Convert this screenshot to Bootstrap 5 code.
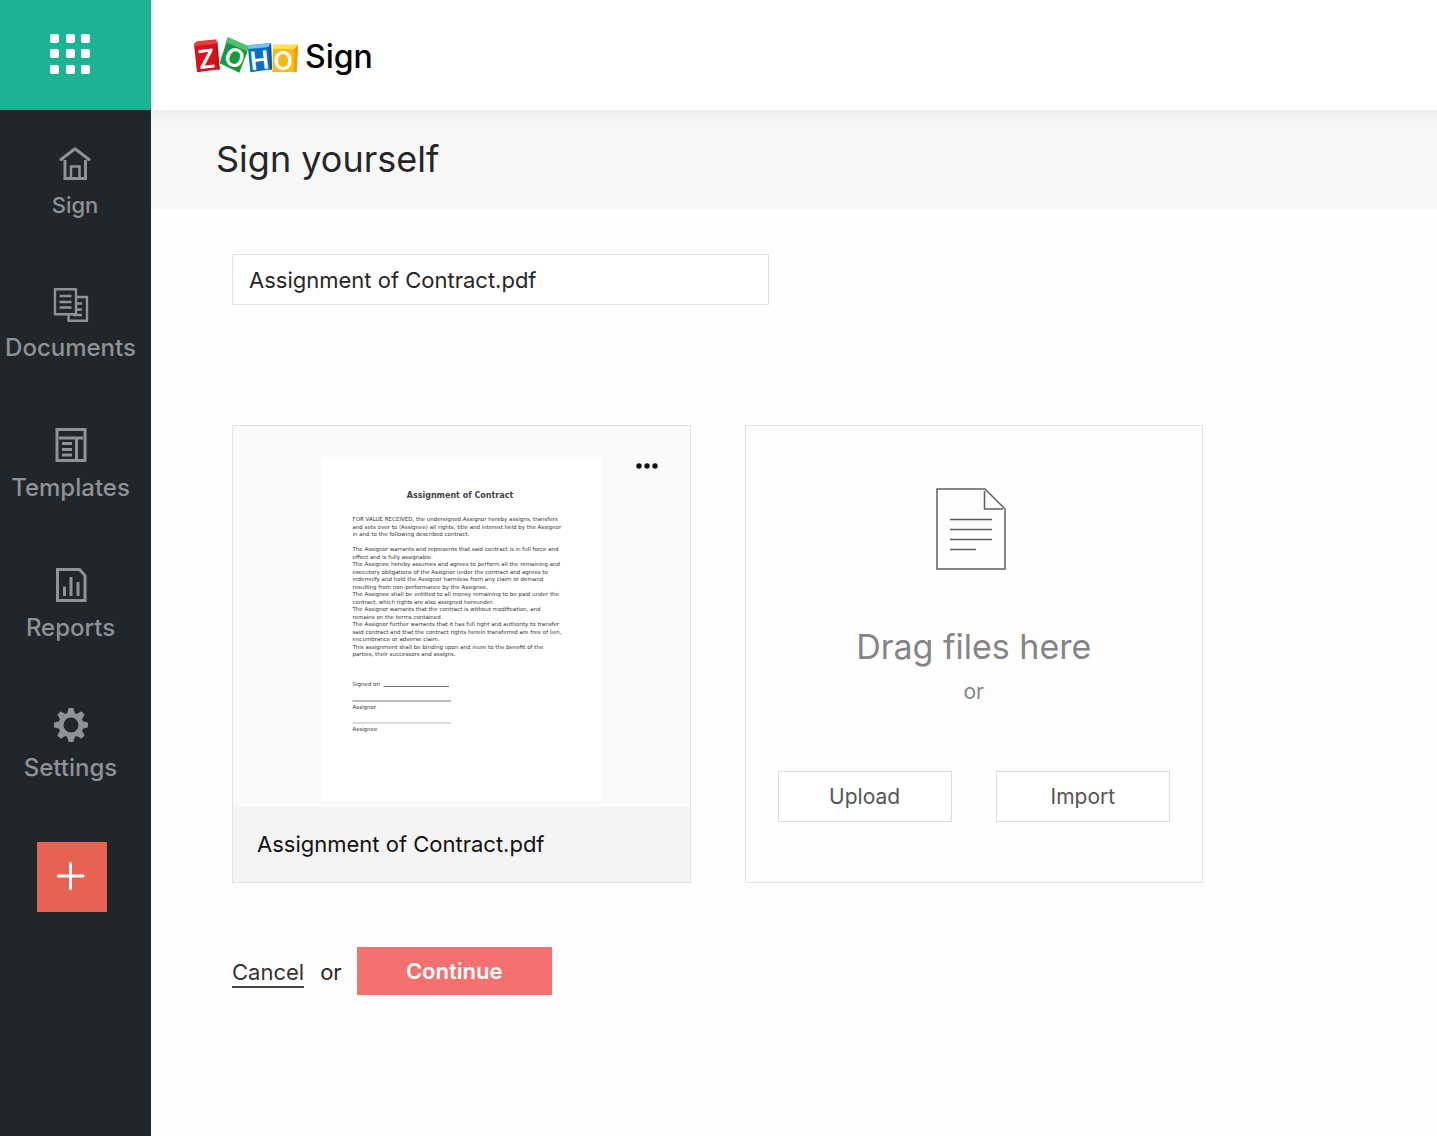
<!DOCTYPE html>
<html lang="en">
<head>
<meta charset="utf-8">
<meta name="viewport" content="width=device-width, initial-scale=1">
<title>Zoho Sign - Sign yourself</title>
<link href="https://cdn.jsdelivr.net/npm/bootstrap@5.3.0/dist/css/bootstrap.min.css" rel="stylesheet">
<style>
:root { --ink: #262626; --line: #e2e2e2; --side: #21262a; --side-fg: #8f9296; }
body { font-family: Inter, "Liberation Sans", sans-serif; font-size: 22px; line-height: 28px; color: var(--ink); background: #fefefe; }
svg { display: block; }
.side { width: 151px; background: var(--side); }
.apps-btn { height: 110px; background: #1bb394; border: 0; padding: 0 10px 2px 0; }
.side-nav { padding: 37px 10px 0 0; gap: 64px; }
.side-link { color: var(--side-fg); font-size: 24px; font-weight: 500; line-height: 32px; gap: 10px; }
.side-home { font-size: 22px; line-height: 28px; padding: 0 0 5px 9px; }
.side-link:hover { color: #fff; }
.add-btn { width: 70px; height: 70px; margin: 58px 0 0 37px; background: #e66252; border: 0; }
.topbar { height: 110px; padding-left: 43px; background: #fff; gap: 6px; }
.brand-name { font-size: 32px; font-weight: 500; line-height: 40px; color: #000; padding-top: 4px; }
.title-band { height: 99px; padding: 0 0 2px 65px; background: linear-gradient(#eeeeee, #f5f5f5 9px, #f7f7f7 18px); }
.title-band h1 { font-size: 36px; line-height: 44px; font-weight: 400; }
.content { padding: 45px 40px 60px 81px; }
.name-box { max-width: 537px; height: 51px; padding: 0 16px; font-size: 22px; color: var(--ink); border: 1px solid var(--line); border-radius: 0; background: #fff; }
.tiles { max-width: 971px; gap: 54px; margin-top: 120px; }
.tile { flex: 1 1 0; height: 458px; border: 1px solid var(--line); }
.thumb { background: #fafafa; padding-top: 31px; height: 381px; }
.sheet { background: #fff; width: 280px; height: 344px; }
.tile-name { background: #f4f4f4; color: #111; padding: 0 0 2px 24px; }
.more-btn { top: 29px; right: 26px; padding: 6px; border: 0; background: none; }
.drop-icon { margin-top: 62px; }
.drop-title { font-size: 34px; line-height: 40px; color: #858585; margin-top: 57px; }
.drop-or { font-size: 21px; color: #858585; margin-top: 11px; }
.drop-actions { gap: 44px; padding: 0 32px; margin-top: 65px; }
.plain-btn { height: 51px; font-size: 21px; color: #555; border: 1px solid #dcdcdc; border-radius: 0; background: #fff; }
.form-foot { margin-top: 64px; gap: 15px; }
.cancel-link { color: #333; text-decoration: none; border-bottom: 2px solid #444; }
.go-btn { width: 195px; height: 48px; font-size: 22px; font-weight: 600; color: #fff; background: #f57170; border: 0; border-radius: 0; }
</style>
</head>
<body>
<div class="d-flex min-vh-100">
  <aside class="side flex-shrink-0 d-flex flex-column">
    <button class="apps-btn d-flex align-items-center justify-content-center" type="button" aria-label="Apps">
      <svg width="42" height="42" fill="#fff"><rect x="0" y="1" width="9" height="9" rx="2"/><rect x="16" y="1" width="9" height="9" rx="2"/><rect x="31" y="1" width="9" height="9" rx="2"/><rect x="0" y="16" width="9" height="9" rx="2"/><rect x="16" y="16" width="9" height="9" rx="2"/><rect x="31" y="16" width="9" height="9" rx="2"/><rect x="0" y="32" width="9" height="9" rx="2"/><rect x="16" y="32" width="9" height="9" rx="2"/><rect x="31" y="32" width="9" height="9" rx="2"/></svg>
    </button>
    <nav class="side-nav nav flex-column flex-nowrap">
      <a class="side-link side-home d-flex flex-column align-items-center text-decoration-none" href="#">
        <svg width="34" height="34" fill="none" stroke="currentColor" stroke-width="3"><path d="M3 12.500 17 1.800 31 12.500" stroke-linecap="round" stroke-linejoin="round"/><path d="M7 13V31.500H27.500V13"/><path d="M13 31V19.500H21.500V31" stroke-width="2.500"/></svg>
        Sign
      </a>
      <a class="side-link d-flex flex-column align-items-center text-decoration-none" href="#">
        <svg width="36" height="34" fill="none" stroke="currentColor" stroke-width="2.400" stroke-linejoin="round"><rect x="2" y="1.200" width="21" height="25"/><path d="M24 9H34V32.800H15.500V27M6.500 8H18.500M6.500 14H18.500M6.500 19.500H18.500M24 15.500H29M24 21.500H29M20 27H29"/></svg>
        Documents
      </a>
      <a class="side-link d-flex flex-column align-items-center text-decoration-none" href="#">
        <svg width="34" height="34" fill="none" stroke="currentColor" stroke-width="3"><rect x="3" y="1.500" width="28" height="31"/><path d="M5 10H29M22.500 10V31M8 15.500H18M8 21.500H18M8 27H18"/></svg>
        Templates
      </a>
      <a class="side-link d-flex flex-column align-items-center text-decoration-none" href="#">
        <svg width="34" height="34" fill="none" stroke="currentColor" stroke-width="3"><path d="M3.500 1.500H25.500L31 7.500V32.500H3.500Z"/><path d="M10.500 28V18.500M17 28V9M24 28V14"/></svg>
        Reports
      </a>
      <a class="side-link d-flex flex-column align-items-center text-decoration-none" href="#">
        <svg width="34" height="34" viewBox="-17 -17 34 34"><circle r="10" fill="none" stroke="currentColor" stroke-width="5"/><g fill="currentColor"><path id="tooth" d="M-4-11-2.500-16.500Q-2.300-17-1.800-17H1.800Q2.300-17 2.500-16.500L4-11Z"/><use href="#tooth" transform="rotate(45)"/><use href="#tooth" transform="rotate(90)"/><use href="#tooth" transform="rotate(135)"/><use href="#tooth" transform="rotate(180)"/><use href="#tooth" transform="rotate(225)"/><use href="#tooth" transform="rotate(270)"/><use href="#tooth" transform="rotate(315)"/></g></svg>
        Settings
      </a>
    </nav>
    <button class="add-btn d-flex align-items-center justify-content-center" type="button" aria-label="New">
      <svg width="30" height="30" stroke="#fff" stroke-width="3" stroke-linecap="round"><path d="M13.500 1.500V26.500M1.500 14H26"/></svg>
    </button>
  </aside>

  <div class="flex-grow-1 d-flex flex-column">
    <header class="topbar d-flex align-items-center">
      <svg width="105" height="49" viewBox="42 28 315 147" role="img" aria-label="Zoho">
        <g font-family="Inter, sans-serif" font-weight="600" fill="#fff" text-anchor="middle">
          <path d="M42 66 108 57 119 143 51 152Z" fill="#d8101f"/><path d="M42 66 50 59 110 53 108 66 44 74Z" fill="#ef3b3f"/><path d="M108 66 112 55 119 143 114 146Z" fill="#b00c18"/>
          <path d="M143 47 206 74 200 96 178 153 119 125 132 85Z" fill="#149a3c"/><path d="M143 47 206 74 200 88 138 62Z" fill="#4fc06c"/><path d="M138 62 143 47 124 105 119 125Z" fill="#0b7a2c"/>
          <path d="M203 71 273 64 276 143 211 152Z" fill="#0b6fc4"/><path d="M203 71 273 64 266 76 204 82Z" fill="#7cc0ee"/><path d="M266 76 273 64 276 143 270 146Z" fill="#0a559c"/>
          <path d="M279 69 354 69 350 150 277 152Z" fill="#fcb913"/><path d="M279 69 354 69 343 82 278 82Z" fill="#ffe14d"/><path d="M343 82 354 69 350 150 342 152Z" fill="#f39a10"/>
          <text x="80" y="140" font-size="78" transform="rotate(-7 80 112)">Z</text>
          <text x="164" y="135" font-size="76" transform="rotate(24 164 108)">O</text>
          <text x="238" y="143" font-size="76" transform="rotate(-6 238 115)">H</text>
          <text x="310" y="145" font-size="76">O</text>
        </g>
      </svg>
      <span class="brand-name">Sign</span>
    </header>
    <div class="title-band d-flex align-items-center"><h1 class="m-0">Sign yourself</h1></div>

    <main class="content">
      <input class="name-box form-control" type="text" value="Assignment of Contract.pdf" aria-label="Document name">

      <div class="tiles d-flex">
        <section class="tile position-relative d-flex flex-column">
          <div class="thumb d-flex justify-content-center align-items-start">
            <svg class="sheet" viewBox="0 0 560 688" font-family="DejaVu Sans, sans-serif" font-size="11" fill="#333">
              <text x="278" y="82" font-size="16" font-weight="700" text-anchor="middle" fill="#444">Assignment of Contract</text>
              <text x="63" y="128">FOR VALUE RECEIVED, the undersigned Assignor hereby assigns, transfers</text>
              <text x="63" y="143">and sets over to (Assignee) all rights, title and interest held by the Assignor</text>
              <text x="63" y="158">in and to the following described contract:</text>
              <text x="63" y="188">The Assignor warrants and represents that said contract is in full force and</text>
              <text x="63" y="203">effect and is fully assignable.</text>
              <text x="63" y="218">The Assignee hereby assumes and agrees to perform all the remaining and</text>
              <text x="63" y="233">executory obligations of the Assignor under the contract and agrees to</text>
              <text x="63" y="248">indemnify and hold the Assignor harmless from any claim or demand</text>
              <text x="63" y="263">resulting from non-performance by the Assignee.</text>
              <text x="63" y="278">The Assignee shall be entitled to all money remaining to be paid under the</text>
              <text x="63" y="293">contract, which rights are also assigned hereunder.</text>
              <text x="63" y="308">The Assignor warrants that the contract is without modification, and</text>
              <text x="63" y="323">remains on the terms contained.</text>
              <text x="63" y="338">The Assignor further warrants that it has full right and authority to transfer</text>
              <text x="63" y="353">said contract and that the contract rights herein transferred are free of lien,</text>
              <text x="63" y="368">encumbrance or adverse claim.</text>
              <text x="63" y="383">This assignment shall be binding upon and inure to the benefit of the</text>
              <text x="63" y="398">parties, their successors and assigns.</text>
              <text x="63" y="458">Signed on</text>
              <text x="63" y="503">Assignor</text>
              <text x="63" y="548">Assignee</text>
              <path d="M125 459H256M63 488H260" stroke="#777" stroke-width="2"/><path d="M63 532H260" stroke="#bbb" stroke-width="2"/>
            </svg>
          </div>
          <button class="more-btn position-absolute" type="button" aria-label="More options"><svg width="22" height="10" fill="#111"><circle cx="3" cy="5" r="2.700"/><circle cx="11" cy="5" r="2.700"/><circle cx="19" cy="5" r="2.700"/></svg></button>
          <div class="tile-name flex-grow-1 d-flex align-items-center">Assignment of Contract.pdf</div>
        </section>

        <section class="tile d-flex flex-column align-items-center">
          <svg class="drop-icon" width="76" height="82" fill="none" stroke="#596160" stroke-width="1.500"><path d="M1 1H49L69 21V81H1ZM48.500 3V21H67"/><path d="M14 31.500H56M14 41.500H56M14 51.500H56M14 61.500H40"/></svg>
          <div class="drop-title">Drag files here</div>
          <div class="drop-or">or</div>
          <div class="drop-actions d-flex w-100">
            <button class="plain-btn btn flex-fill w-50" type="button">Upload</button>
            <button class="plain-btn btn flex-fill w-50" type="button">Import</button>
          </div>
        </section>
      </div>

      <div class="form-foot d-flex align-items-center">
        <div class="d-flex gap-3 pt-1">
          <a class="cancel-link" href="#">Cancel</a>
          <span>or</span>
        </div>
        <button class="go-btn btn" type="button">Continue</button>
      </div>
    </main>
  </div>
</div>
<script src="https://cdn.jsdelivr.net/npm/bootstrap@5.3.0/dist/js/bootstrap.bundle.min.js"></script>
</body>
</html>
